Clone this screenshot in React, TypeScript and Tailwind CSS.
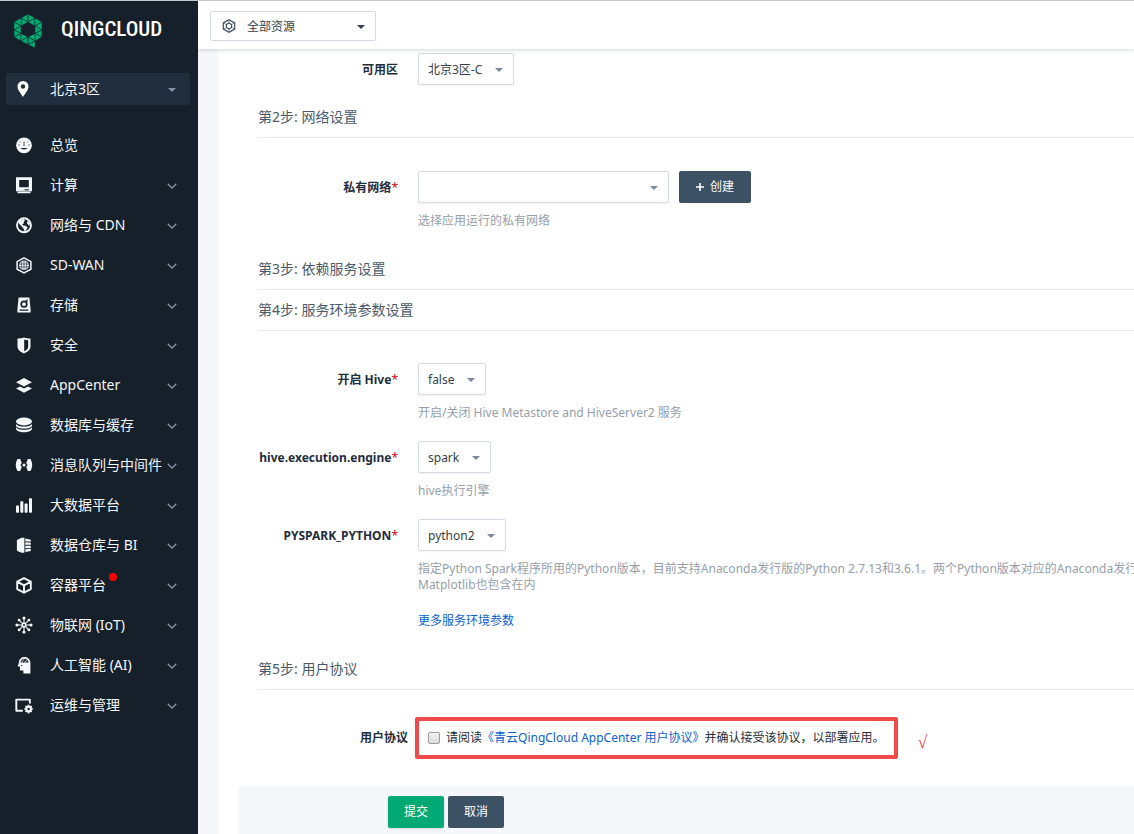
import React from "react";

type IconProps = { children: React.ReactNode };

function Glyph({ children }: IconProps) {
  return (
    <svg viewBox="0 0 16 16" className="size-4 shrink-0 overflow-visible fill-[#f5f7fa]" aria-hidden="true">
      {children}
    </svg>
  );
}

const DARK = "#16202a";

const icons: Record<string, React.ReactNode> = {
  overview: (
    <>
      <circle cx="8" cy="8.3" r="7.9" />
      <path d="M4.4 11h7.2a4 2.600 0 0 1-7.200 0z" fill={DARK} />
      <path d="M8 4.600v4.600M2.600 8h1.200M12.200 8h1.200M4 4.400l.9.900M12 4.400l-.9.900" stroke={DARK} strokeWidth=".8" />
    </>
  ),
  compute: (
    <>
      <path d="M0 .2h16v14h-1.500v2H1.500v-2H0z" />
      <path d="M3.200 3h9.600v7.200H3.200zM8.600 12.300h4.200v1H8.600z" fill={DARK} />
      <path d="M1.500 14.200h13" stroke={DARK} strokeWidth=".5" />
    </>
  ),
  network: (
    <>
      <circle cx="8" cy="8.300" r="7" fill="none" stroke="#f5f7fa" strokeWidth="1.900" />
      <path d="M3 4 7.500 2 9 3.600 7.600 4.900 8 6.600 6.200 7 7 8.400 9.800 8.800 11.600 10.400 10.400 12.800 8.600 14.400 7.400 11.200 5 8.800 2.800 6.400z" />
      <path d="M11.400 3.500 14 6.200l-.8 2.800-2.200-2.400z" />
    </>
  ),
  sdwan: (
    <>
      <path d="M8 .9 14.900 4.600v7.600L8 15.900 1.100 12.200V4.600z" fill="none" stroke="#f5f7fa" strokeWidth="1.500" />
      <circle cx="8" cy="8.400" r="4.900" />
      <path d="M3.400 7h9.200M3.400 9.900h9.200M8 3.600v9.600M6 4.200c-1 2.800-1 5.600 0 8.400M10 4.200c1 2.800 1 5.600 0 8.400" fill="none" stroke={DARK} strokeWidth=".6" />
    </>
  ),
  storage: (
    <>
      <path d="M2.600.6h10.800l1.200 12v3H1.400v-3z" />
      <circle cx="8" cy="7.200" r="3.600" fill={DARK} />
      <circle cx="8" cy="7.200" r="1.900" />
      <path d="M9.400 3.600 12 2.200l-1 3.200zM3.600 12.600h8.800v1.100H3.600z" fill={DARK} />
    </>
  ),
  security: (
    <>
      <path d="M1.500 1.600C4 1.500 6 1.100 8 .4c2 .7 4 1.100 6.500 1.200v8.200c0 3-3 5.200-6.500 6.600-3.500-1.400-6.500-3.600-6.500-6.600z" />
      <path d="M8.200 2.600c1.400.4 2.600.6 4 .7v6.400c0 2-1.800 3.500-4 4.600z" fill={DARK} />
    </>
  ),
  appcenter: (
    <>
      <path d="M8 .9 16 5.200 8 9.600 0 5.200z" />
      <path d="M0 11.400l4-2L8 11.600l4-2.200 4 2-8 4.300z" />
    </>
  ),
  database: (
    <>
      <ellipse cx="8" cy="4.500" rx="8" ry="3.900" />
      <path d="M0 6.900c1.600 3.400 14.400 3.400 16 0v2c-1.600 3.400-14.400 3.400-16 0z" />
      <path d="M0 10.300c1.600 3.400 14.400 3.400 16 0v1.600c-1.600 4.400-14.400 4.400-16 0z" />
    </>
  ),
  queue: (
    <>
      <path d="M1.600 2h2.600l1.500 4-1.200 2 1.200 2-1.500 4H1.600C-.8 10.400-.8 5.600 1.600 2z" />
      <path d="M14.400 2h-2.600l-1.500 4 1.200 2-1.200 2 1.500 4h2.600c2.400-3.600 2.400-8.400 0-12z" />
      <circle cx="8" cy="8" r="1.500" />
    </>
  ),
  bigdata: (
    <>
      <rect x="0" y="8.600" width="3" height="7.200" rx=".8" />
      <rect x="4.300" y="4.200" width="3" height="11.600" rx=".8" />
      <rect x="8.600" y="6.400" width="3" height="9.400" rx=".8" />
      <rect x="13" y="1.200" width="3" height="14.600" rx=".8" />
    </>
  ),
  warehouse: (
    <>
      <path d="M.9 3 5.600.8h2.800v15H5.600L.9 13.700z" />
      <path d="M9.300 1.500l5.500 1.200v2.100l-5.500-.6zM9.300 5.200l5.500.5v2.100H9.300zM9.300 8.800h5.500v2.100l-5.500.4zM9.300 12.300l5.500-.6v2.200l-5.500 1.200z" />
    </>
  ),
  container: (
    <path
      d="M8 1.100 14.800 4.700v7.400L8 15.700 1.200 12.100V4.700zM1.500 4.900 8 8.400l6.500-3.500M8 8.400v7"
      fill="none"
      stroke="#f5f7fa"
      strokeWidth="1.900"
      strokeLinejoin="round"
    />
  ),
  iot: (
    <>
      <path d="M8 1.500v13M1.500 8h13M3.200 3.200l9.600 9.600M12.800 3.200l-9.600 9.600" stroke="#f5f7fa" strokeWidth="1.100" />
      <circle cx="8" cy="8" r="2.600" />
      <circle cx="8" cy="1" r="1.600" />
      <circle cx="8" cy="15" r="1.600" />
      <circle cx="1" cy="8" r="1.600" />
      <circle cx="15" cy="8" r="1.600" />
      <circle cx="3.100" cy="3.100" r="1.400" />
      <circle cx="12.900" cy="3.100" r="1.400" />
      <circle cx="3.100" cy="12.900" r="1.400" />
      <circle cx="12.900" cy="12.900" r="1.400" />
      <circle cx="8" cy="8" r="1" fill={DARK} />
    </>
  ),
  ai: (
    <>
      <path d="M8.400 0c3.800 0 6 2.600 6 6v10.400H7.400v-2.800H4v-3.800L1.600 9.200 2.800 6C3 2.400 5 0 8.400 0z" />
      <path d="M4.400 5.600C4.800 2.900 6.200 1.700 8.400 1.700s3.800 1.400 4.200 3.900z" fill={DARK} />
      <path d="M6 5.500c0-1.600 1-2.600 2.400-2.600M8.400 5.500l2.400-2.200" fill="none" stroke="#f5f7fa" strokeWidth=".9" />
      <circle cx="5.800" cy="8.600" r=".7" fill={DARK} />
    </>
  ),
  ops: (
    <>
      <path d="M6.800 13.700H.300V2.600h13.600v4" fill="none" stroke="#f5f7fa" strokeWidth="1.900" strokeLinejoin="round" />
      <circle cx="12.600" cy="12" r="2.300" fill="none" stroke="#f5f7fa" strokeWidth="2.200" />
      <path d="M12.600 7.700v1.600M12.600 14.700v1.700M8.300 12h1.600M15.300 12h1.600M9.600 9l1.100 1.100M14.500 13.900l1.100 1.100M15.600 9l-1.100 1.100M10.700 13.900l-1.100 1.100" stroke="#f5f7fa" strokeWidth="1.700" />
    </>
  ),
};

const menu: { icon: string; label: string; leaf?: boolean; dot?: boolean }[] = [
  { icon: "overview", label: "总览", leaf: true },
  { icon: "compute", label: "计算" },
  { icon: "network", label: "网络与 CDN" },
  { icon: "sdwan", label: "SD-WAN" },
  { icon: "storage", label: "存储" },
  { icon: "security", label: "安全" },
  { icon: "appcenter", label: "AppCenter" },
  { icon: "database", label: "数据库与缓存" },
  { icon: "queue", label: "消息队列与中间件" },
  { icon: "bigdata", label: "大数据平台" },
  { icon: "warehouse", label: "数据仓库与 BI" },
  { icon: "container", label: "容器平台", dot: true },
  { icon: "iot", label: "物联网 (IoT)" },
  { icon: "ai", label: "人工智能 (AI)" },
  { icon: "ops", label: "运维与管理" },
];

function Logo() {
  return (
    <svg viewBox="0 0 28 34" className="h-[34px] w-7 shrink-0" aria-hidden="true">
      <g fill="#00aa72" stroke={DARK} strokeWidth=".5">
        <path d="M14 0v8L7 4zM14 0v8l7-4z" />
        <path d="M7 4v8l7-4zM21 4v8l-7-4z" />
        <path d="M7 4v8L0 8zM21 4v8l7-4z" />
        <path d="M0 8v8l7-4zM28 8v8l-7-4z" />
        <path d="M7 12v7.500L0 16zM21 12v7.500L28 16z" />
        <path d="M0 16v7l7-3.500zM28 16v7l-7-3.500z" />
        <path d="M7 19.500v7.500l-7-4zM21 19.500v7.500l7-4z" />
        <path d="M7 19.500v7.500l7-4zM21 19.500v7.500l-7-4z" />
        <path d="M14 23v7.500L7 27zM14 23v7.500l7-3.500z" />
        <path d="M21 27v7l-7-3.500z" />
      </g>
    </svg>
  );
}

function Caret({ className }: { className: string }) {
  return (
    <svg viewBox="0 0 8 4" className={`pointer-events-none absolute mt-px h-1 w-2 ${className}`} aria-hidden="true">
      <path d="M0 0h8L4 4z" fill="currentColor" />
    </svg>
  );
}

function Select({ id, value, wide }: { id: string; value: string; wide?: boolean }) {
  return (
    <div className={`relative flex items-center ${wide ? "w-[251px]" : ""}`}>
      <select
        id={id}
        className={`h-8 appearance-none rounded-xs border border-[#d3dce6] bg-white pt-[2px] pr-[30px] pl-[9px] text-[#343f4a] shadow-xs ${wide ? "w-full" : ""}`}
      >
        <option>{value}</option>
      </select>
      <Caret className="right-[11px] text-[#7c8897]" />
    </div>
  );
}

function Step({ children }: { children: React.ReactNode }) {
  return (
    <h2 className="h-[41px] border-b border-[#e5e9ee] text-sm leading-10 text-[#4c5a69]">{children}</h2>
  );
}

function Field({
  id,
  label,
  required,
  hint,
  children,
}: {
  id: string;
  label: string;
  required?: boolean;
  hint?: React.ReactNode;
  children: React.ReactNode;
}) {
  return (
    <div className="grid grid-cols-[140px_1fr] gap-x-5">
      <label htmlFor={id} className="h-8 text-right leading-[34px] font-bold whitespace-nowrap text-[#1f2d3d]">
        {label}
        {required && <span className="font-normal text-[#d0021b]">*</span>}
      </label>
      <div className="flex h-8 items-center gap-[10px]">{children}</div>
      {hint && <p className="col-start-2 mt-[10px] leading-4 whitespace-nowrap text-[#95a0ab]">{hint}</p>}
    </div>
  );
}

export default function App() {
  return (
    <div className="flex h-screen overflow-hidden border-t border-[#c4c7ca] bg-[#f5f7fa] font-['Noto_Sans','Noto_Sans_CJK_SC',sans-serif] text-xs">
      <aside className="w-[198px] shrink-0 bg-[#16202a] text-[#f5f7fa]">
        <div className="flex h-[60px] items-center gap-[19px] pl-[14px]">
          <Logo />
          <span className="pb-1 font-['Roboto_Condensed','DejaVu_Sans_Condensed',sans-serif] text-[21px] font-medium text-white">
            QINGCLOUD
          </span>
        </div>
        <button
          type="button"
          className="mx-[6px] mt-3 flex h-8 w-[184px] items-center rounded-xs bg-[#1f2d3d] pl-[10px] text-left text-sm"
        >
          <svg viewBox="0 0 16 16" className="size-4 fill-white" aria-hidden="true">
            <path fillRule="evenodd" d="M7 0a5.500 5.500 0 0 1 5.500 5.500C12.500 9 9 12.500 7 16 5 12.500 1.500 9 1.500 5.500A5.500 5.500 0 0 1 7 0zm0 3.300a2.200 2.200 0 1 0 0 4.400 2.200 2.200 0 0 0 0-4.400z" />
          </svg>
          <span className="ml-[18px] grow">北京3区</span>
          <svg viewBox="0 0 8 4" className="mt-px mr-[14px] h-1 w-2 fill-[#8492a6]" aria-hidden="true">
            <path d="M0 0h8L4 4z" />
          </svg>
        </button>
        <nav className="mt-5">
          <ul>
            {menu.map((item) => (
              <li key={item.label}>
                <a href="#" className="flex h-10 items-center pr-[21px] pl-4 text-sm whitespace-nowrap">
                  <Glyph>{icons[item.icon]}</Glyph>
                  <span className="relative ml-[18px]">
                    {item.label}
                    {item.dot && <span className="absolute -top-[2px] -right-[11px] size-2 rounded-full bg-[#ff0000]" />}
                  </span>
                  {!item.leaf && (
                    <svg viewBox="0 0 10 6" className="mt-[2px] ml-auto h-[6px] w-[10px] shrink-0" aria-hidden="true">
                      <path d="M.7.7 5 5 9.300.7" fill="none" stroke="#8492a6" strokeWidth="1.300" />
                    </svg>
                  )}
                </a>
              </li>
            ))}
          </ul>
        </nav>
      </aside>

      <div className="flex min-w-0 grow flex-col">
        <header className="z-10 flex h-12 shrink-0 items-center bg-white pt-[2px] pl-3 shadow-[0_1px_4px_rgba(31,45,61,0.2)]">
          <div className="relative flex w-[166px] items-center">
            <svg viewBox="0 0 14 14" className="absolute left-3 size-[14px]" fill="none" stroke="#3d4f63" strokeWidth="1.200" aria-hidden="true">
              <path d="M7 .8 12.700 3.900v6.200L7 13.200 1.300 10.100V3.900z" />
              <path d="M7 4 9.600 5.500v3L7 10 4.400 8.500v-3z" />
              <path d="M7 .8V4M12.700 3.900 9.600 5.500M12.700 10.100 9.600 8.500M7 13.200V10M1.300 10.100l3.100-1.600M1.300 3.900l3.100 1.600" strokeWidth=".6" />
            </svg>
            <select
              aria-label="资源"
              className="h-[30px] w-full appearance-none rounded-xs border border-[#d3dce6] bg-white pt-[2px] pl-9 text-[#343f4a]"
            >
              <option>全部资源</option>
            </select>
            <Caret className="right-[11px] text-[#324057]" />
          </div>
        </header>

        <main className="ml-5 grow overflow-hidden bg-white">
          <form>
            <div className="pt-1 pl-10">
              <Field id="zone" label="可用区">
                <Select id="zone" value="北京3区-C" />
              </Field>
              <div className="mt-3">
                <Step>第2步: 网络设置</Step>
              </div>
              <div className="pt-[33px] pb-5">
                <Field id="vxnet" label="私有网络" required hint="选择应用运行的私有网络">
                  <Select id="vxnet" value="" wide />
                  <button
                    type="button"
                    className="flex h-8 w-[72px] items-center justify-center gap-[6px] rounded-xs bg-[#3d5165] text-white"
                  >
                    <svg viewBox="0 0 8 8" className="size-2" aria-hidden="true">
                      <path d="M4 0v8M0 4h8" stroke="#fff" strokeWidth="1.600" />
                    </svg>
                    创建
                  </button>
                </Field>
              </div>
              <Step>第3步: 依赖服务设置</Step>
              <Step>第4步: 服务环境参数设置</Step>
              <div className="flex flex-col gap-5 pt-8 pb-5">
                <Field id="hive" label="开启 Hive" required hint="开启/关闭 Hive Metastore and HiveServer2 服务">
                  <Select id="hive" value="false" />
                </Field>
                <Field id="engine" label="hive.execution.engine" required hint="hive执行引擎">
                  <Select id="engine" value="spark" />
                </Field>
                <Field
                  id="python"
                  label="PYSPARK_PYTHON"
                  required
                  hint={
                    <>
                      指定Python Spark程序所用的Python版本，目前支持Anaconda发行版的Python 2.7.13和3.6.1。两个Python版本对应的Anaconda发行
                      <br />
                      Matplotlib也包含在内
                    </>
                  }
                >
                  <Select id="python" value="python2" />
                </Field>
                <a href="#" className="ml-40 self-start leading-4 text-[#0b62d0]">
                  更多服务环境参数
                </a>
              </div>
              <Step>第5步: 用户协议</Step>
              <div className="flex items-center py-[27px]">
                <span className="w-[150px] text-right font-bold text-[#1f2d3d]">用户协议</span>
                <div className="ml-[7px] flex h-[42px] items-center rounded-xs border-4 border-[#f04a4a] px-[9px] whitespace-nowrap text-[#1f2d3d]">
                  <input
                    id="agree"
                    type="checkbox"
                    className="mr-[6px] size-3 appearance-none rounded-xs border border-[#9b9b9b] bg-linear-to-b from-[#f2f2f2] to-[#dcdcdc]"
                  />
                  <label htmlFor="agree">
                    请阅读
                    <a href="#" className="text-[#0b62d0]">
                      《青云QingCloud AppCenter 用户协议》
                    </a>
                    并确认接受该协议，以部署应用。
                  </label>
                </div>
                <span className="ml-5 pt-2 font-['Liberation_Serif',serif] text-lg leading-6 text-[#f04a4a]">√</span>
              </div>
            </div>
            <div className="ml-5 flex gap-1 bg-[#f5f7fa] py-[10px] pl-[150px]">
              <button type="submit" className="h-8 w-14 rounded-xs bg-[#00aa72] text-white shadow-sm">
                提交
              </button>
              <button type="button" className="h-8 w-14 rounded-xs bg-[#3d5165] text-white">
                取消
              </button>
            </div>
          </form>
        </main>
      </div>
    </div>
  );
}
